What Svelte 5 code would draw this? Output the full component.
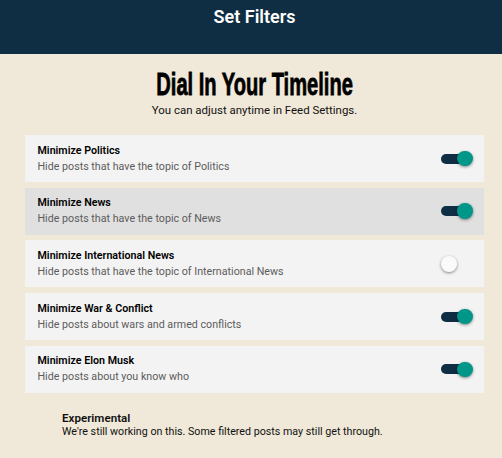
<script>
  let filters = $state([
    { title: 'Minimize Politics', desc: 'Hide posts that have the topic of Politics', on: true },
    { title: 'Minimize News', desc: 'Hide posts that have the topic of News', on: true, hover: true },
    { title: 'Minimize International News', desc: 'Hide posts that have the topic of International News', on: false },
    { title: 'Minimize War & Conflict', desc: 'Hide posts about wars and armed conflicts', on: true },
    { title: 'Minimize Elon Musk', desc: 'Hide posts about you know who', on: true }
  ]);
</script>

<div class="page">
  <header class="top-bar">
    <h1>Set Filters</h1>
  </header>

  <div class="intro">
    <h2>Dial In Your Timeline</h2>
    <p>You can adjust anytime in Feed Settings.</p>
  </div>

  <div class="filter-list">
    {#each filters as filter}
      <div class="filter-row" class:hover={filter.hover}>
        <div class="filter-text">
          <div class="filter-title">{filter.title}</div>
          <div class="filter-desc">{filter.desc}</div>
        </div>
        <button class="switch" class:on={filter.on} aria-label={filter.title} onclick={() => (filter.on = !filter.on)}>
          <span class="thumb"></span>
        </button>
      </div>
    {/each}
  </div>

  <div class="note">
    <div class="note-title">Experimental</div>
    <div>We're still working on this. Some filtered posts may still get through.</div>
  </div>
</div>

<style>
  :global(body) {
    margin: 0;
    background: #f0e8d8;
  }

  .page {
    height: 458px;
    overflow: hidden;
    background: #f0e8d8;
    font-family: Roboto, sans-serif;
    color: #000;
  }

  .top-bar {
    height: 54px;
    padding-left: 7px;
    box-sizing: border-box;
    background: #102e43;
    color: #fff;
    text-align: center;
  }

  .top-bar h1 {
    margin: 0;
    padding-top: 6px;
    font-size: 18px;
    line-height: 22px;
    font-weight: 600;
  }

  .intro {
    padding: 14px 0 0 7px;
    text-align: center;
  }

  /* no Anton here: squeeze a bold sans into the same tall narrow shape */
  .intro h2 {
    display: inline-block;
    margin: 0;
    font-family: "Liberation Sans", sans-serif;
    font-size: 31px;
    line-height: 33px;
    font-weight: 700;
    white-space: nowrap;
    -webkit-text-stroke: 0.8px #000;
    transform: scaleX(0.648);
  }

  .intro p {
    margin: 1px 0 0;
    font-size: 11.45px;
    line-height: 17px;
    color: #111;
  }

  .filter-list {
    display: flex;
    flex-direction: column;
    gap: 5.7px;
    margin: 16px 18px 0 25px;
  }

  .filter-row {
    display: flex;
    align-items: center;
    justify-content: space-between;
    height: 47px;
    padding: 0 13px 0 12.5px;
    background: #f3f3f3;
  }

  .filter-row.hover {
    background: #e0e0e0;
  }

  .filter-title {
    font-size: 10.7px;
    line-height: 16px;
    font-weight: 600;
  }

  .filter-desc {
    font-size: 10.7px;
    line-height: 16px;
    color: #5c5c5c;
  }

  .switch {
    position: relative;
    width: 30px;
    height: 10px;
    padding: 0;
    border: 0;
    border-radius: 5px;
    background: transparent;
  }

  .switch.on {
    background: #102e43;
  }

  .thumb {
    position: absolute;
    top: -2.75px;
    left: 0;
    width: 15.5px;
    height: 15.5px;
    border-radius: 50%;
    background: #fafafa;
    box-shadow: 0 1px 3px rgba(0, 0, 0, 0.45);
  }

  .switch.on .thumb {
    left: 16px;
    background: #009688;
  }

  .note {
    margin: 19px 0 0 62px;
    font-size: 10.7px;
    line-height: 13.5px;
    color: #111;
  }

  .note-title {
    font-weight: 600;
    font-size: 11.6px;
  }
</style>
